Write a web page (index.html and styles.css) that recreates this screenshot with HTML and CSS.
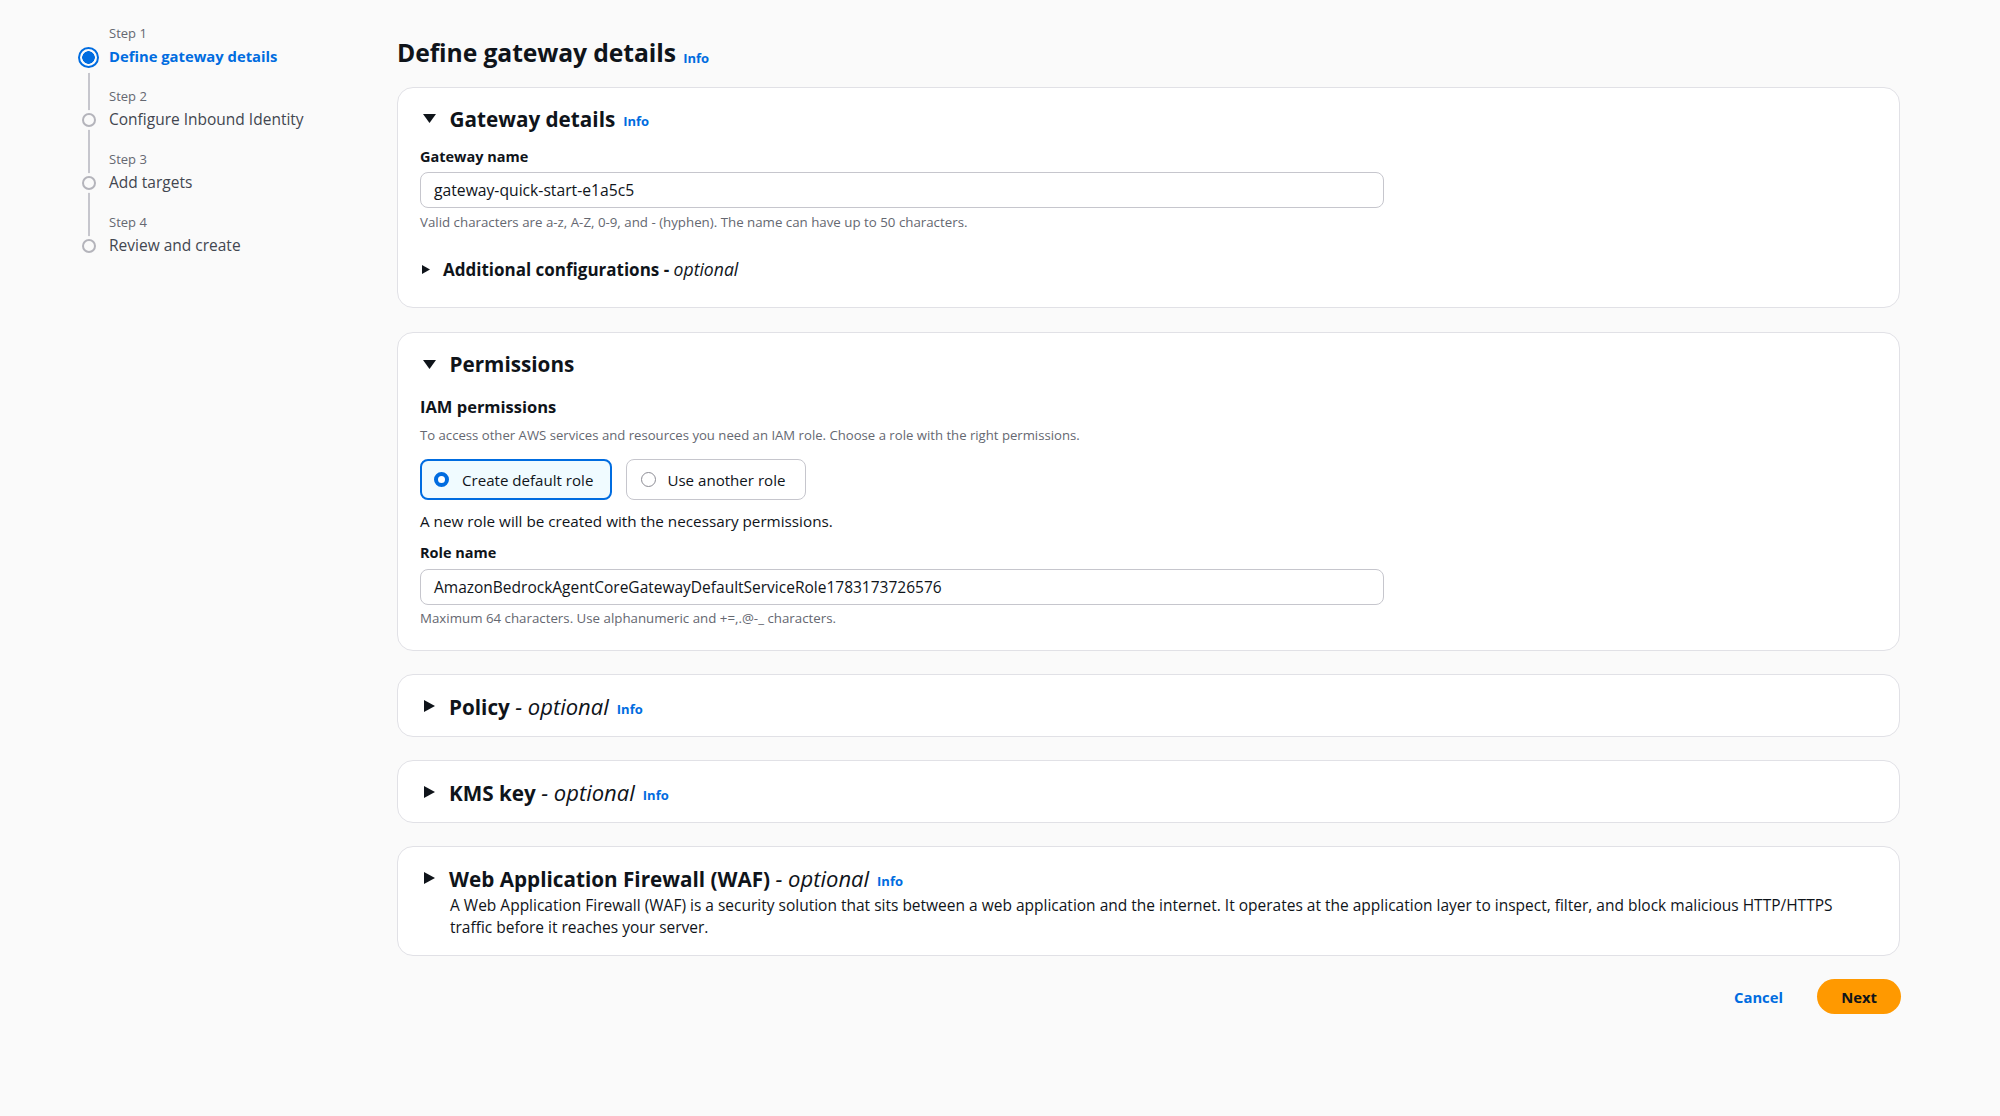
FILE: index.html
```html
<!DOCTYPE html>
<html lang="en">
<head>
<meta charset="utf-8">
<title>Define gateway details</title>
<link rel="stylesheet" href="styles.css">
</head>
<body>
<div class="page">
  <nav class="steps">
    <div class="step step-first">
      <div class="ind"><span class="dot dot-active"></span></div>
      <div class="step-label">Step 1</div>
      <div class="step-title active">Define gateway details</div>
    </div>
    <div class="step">
      <div class="ind"><span class="dot"></span></div>
      <div class="step-label">Step 2</div>
      <div class="step-title">Configure Inbound Identity</div>
    </div>
    <div class="step">
      <div class="ind"><span class="dot"></span></div>
      <div class="step-label">Step 3</div>
      <div class="step-title">Add targets</div>
    </div>
    <div class="step step-last">
      <div class="ind"><span class="dot"></span></div>
      <div class="step-label">Step 4</div>
      <div class="step-title">Review and create</div>
    </div>
  </nav>

  <main class="main">
    <h1 class="page-title">Define gateway details <a class="info info-lg">Info</a></h1>

    <section class="card card-gw">
      <div class="card-head">
        <svg class="caret-down" width="13" height="9" viewBox="0 0 13 9"><polygon points="0,0 13,0 6.5,9" fill="#0f141a"/></svg>
        <h2 class="card-title">Gateway details</h2>
        <a class="info">Info</a>
      </div>
      <label class="field-label fl-first">Gateway name</label>
      <div class="input">gateway-quick-start-e1a5c5</div>
      <p class="hint">Valid characters are a-z, A-Z, 0-9, and - (hyphen). The name can have up to 50 characters.</p>
      <div class="sub-expander">
        <svg class="caret-right-sm" width="8" height="9" viewBox="0 0 8 9"><polygon points="0,0 8,4.5 0,9" fill="#0f141a"/></svg>
        <span class="sub-title">Additional configurations - <em>optional</em></span>
      </div>
    </section>

    <section class="card card-perm">
      <div class="card-head">
        <svg class="caret-down" width="13" height="9" viewBox="0 0 13 9"><polygon points="0,0 13,0 6.5,9" fill="#0f141a"/></svg>
        <h2 class="card-title">Permissions</h2>
      </div>
      <h3 class="group-title">IAM permissions</h3>
      <p class="desc">To access other AWS services and resources you need an IAM role. Choose a role with the right permissions.</p>
      <div class="tiles">
        <div class="tile tile-on"><span class="radio radio-on"></span>Create default role</div>
        <div class="tile"><span class="radio"></span>Use another role</div>
      </div>
      <p class="body-text">A new role will be created with the necessary permissions.</p>
      <label class="field-label fl-role">Role name</label>
      <div class="input input-role">AmazonBedrockAgentCoreGatewayDefaultServiceRole1783173726576</div>
      <p class="hint hint-2">Maximum 64 characters. Use alphanumeric and +=,.@-_ characters.</p>
    </section>

    <section class="card card-sm">
      <div class="card-head">
        <svg class="caret-right" width="11" height="12" viewBox="0 0 11 12"><polygon points="0,0 11,6 0,12" fill="#0f141a"/></svg>
        <h2 class="card-title">Policy <em class="opt">- optional</em></h2>
        <a class="info">Info</a>
      </div>
    </section>

    <section class="card card-sm">
      <div class="card-head">
        <svg class="caret-right" width="11" height="12" viewBox="0 0 11 12"><polygon points="0,0 11,6 0,12" fill="#0f141a"/></svg>
        <h2 class="card-title">KMS key <em class="opt">- optional</em></h2>
        <a class="info">Info</a>
      </div>
    </section>

    <section class="card">
      <div class="card-head">
        <svg class="caret-right" width="11" height="12" viewBox="0 0 11 12"><polygon points="0,0 11,6 0,12" fill="#0f141a"/></svg>
        <h2 class="card-title">Web Application Firewall (WAF) <em class="opt">- optional</em></h2>
        <a class="info">Info</a>
      </div>
      <p class="card-desc">A Web Application Firewall (WAF) is a security solution that sits between a web application and the internet. It operates at the application layer to inspect, filter, and block malicious HTTP/HTTPS traffic before it reaches your server.</p>
    </section>

    <div class="actions">
      <a class="btn-link">Cancel</a>
      <a class="btn-primary">Next</a>
    </div>
  </main>
</div>
</body>
</html>
```

FILE: styles.css
```css
* { box-sizing: border-box; }

html, body {
  margin: 0;
  padding: 0;
  background: #fafafa;
  color: #0f141a;
  font-family: "Open Sans", "Noto Sans", sans-serif;
}

.page {
  display: flex;
  align-items: flex-start;
}

/* ---------- steps ---------- */
.steps {
  width: 397px;
  flex: none;
  padding: 21px 0 0 78px;
}

.step {
  display: grid;
  grid-template-columns: 21px 1fr;
  grid-template-rows: 24px 24px 15px;
  column-gap: 10px;
}

.ind {
  grid-column: 1;
  grid-row: 1 / 4;
  display: grid;
  grid-template-rows: 24px 24px 15px;
  justify-items: center;
  background: linear-gradient(#c6c6cd, #c6c6cd) center / 2px 100% no-repeat;
}
.step-first .ind {
  background-position: center bottom;
  background-size: 2px 27px;
}
.step-last .ind {
  background-position: center top;
  background-size: 2px 36px;
}

.dot {
  grid-row: 2;
  align-self: center;
  width: 14px;
  height: 14px;
  border-radius: 50%;
  border: 2px solid #b4b4bb;
  background: #fafafa;
  box-shadow: 0 0 0 3px #fafafa;
}
.dot-active {
  width: 21px;
  height: 21px;
  border: 2px solid #006ce0;
  background: radial-gradient(circle, #006ce0 0 6px, #fafafa 6.5px);
  box-shadow: 0 0 0 5px #fafafa;
}

.step-label {
  grid-column: 2;
  grid-row: 1;
  font-size: 13px;
  line-height: 24px;
  color: #656871;
}
.step-title {
  grid-column: 2;
  grid-row: 2;
  font-size: 15.5px;
  line-height: 22px;
  color: #424650;
  white-space: nowrap;
}
.step-title.active {
  color: #006ce0;
  font-weight: 700;
  font-size: 14.8px;
}

/* ---------- main ---------- */
.main {
  width: 1503px;
  flex: none;
  padding-top: 34px;
}

.page-title {
  margin: 0 0 15.5px;
  font-size: 24.7px;
  line-height: 37px;
  font-weight: 700;
  letter-spacing: -0.1px;
}

.info {
  color: #006ce0;
  font-size: 13px;
  line-height: 1;
  font-weight: 700;
  margin-left: 6px;
  letter-spacing: 0;
}
.info-lg {
  margin-left: 1px;
  vertical-align: -1px;
}

.card {
  background: #ffffff;
  border: 1px solid #e1e1e6;
  border-radius: 16px;
  padding: 17px 22px 17px 22px;
  margin-bottom: 23px;
}
.card-gw { padding-bottom: 25.5px; margin-bottom: 24px; }
.card-perm { padding-bottom: 23px; }
.card-sm { padding-bottom: 16px; }

.card-head {
  display: flex;
  align-items: center;
  height: 28px;
}
.card-head .info {
  margin-left: 8px;
  position: relative;
  top: 3px;
}

.caret-down {
  flex: none;
  margin: 0 13.5px 0 3px;
}
.caret-right {
  flex: none;
  margin: 0 14px 0 4px;
}

.card-title {
  margin: 0;
  font-size: 20.7px;
  line-height: 28px;
  font-weight: 700;
  white-space: nowrap;
}
.card-title .opt {
  font-weight: 400;
  font-style: italic;
  font-size: 22px;
}

.field-label {
  display: block;
  font-size: 14.5px;
  line-height: 20px;
  font-weight: 700;
}
.fl-first { margin-top: 14px; }
.fl-role { margin-top: 11px; }

.input {
  margin-top: 5px;
  width: 964px;
  height: 36px;
  border: 1px solid #c6c6cd;
  border-radius: 8px;
  background: #ffffff;
  padding: 0 13px;
  font-size: 15.7px;
  line-height: 34px;
  white-space: nowrap;
}
.input-role {
  margin-top: 6px;
  font-size: 15.5px;
}

.hint {
  margin: 5px 0 0;
  font-size: 13.3px;
  line-height: 18px;
  color: #656871;
}
.hint-2 { margin-top: 4px; }

.sub-expander {
  display: flex;
  align-items: center;
  margin-top: 27px;
  height: 24px;
}
.caret-right-sm {
  flex: none;
  margin: 0 13px 0 2px;
}
.sub-title {
  font-size: 17px;
  line-height: 24px;
  font-weight: 700;
}
.sub-title em {
  font-weight: 400;
  font-size: 17.6px;
}

.group-title {
  margin: 18px 0 0;
  font-size: 16.5px;
  line-height: 22px;
  font-weight: 700;
}
.desc {
  margin: 8px 0 0;
  font-size: 13.15px;
  line-height: 18px;
  color: #656871;
}

.tiles {
  display: flex;
  gap: 14px;
  margin-top: 15px;
}
.tile {
  display: flex;
  align-items: center;
  height: 41px;
  padding: 0 20px 0 14.5px;
  border: 1.5px solid #c6c6cd;
  border-radius: 8px;
  background: #ffffff;
  font-size: 15.1px;
  white-space: nowrap;
}
.tile-on {
  border: 2px solid #006ce0;
  background: #f0fbff;
  padding: 0 16.5px 0 12px;
}
.radio {
  width: 15px;
  height: 15px;
  border-radius: 50%;
  border: 1.5px solid #8c8c94;
  background: #ffffff;
  margin-right: 11px;
  flex: none;
}
.radio-on {
  border: 4.5px solid #006ce0;
  margin-right: 13px;
}

.body-text {
  margin: 10px 0 0;
  font-size: 15.25px;
  line-height: 22px;
}

.card-desc {
  margin: 2px 0 0 30px;
  padding-right: 40px;
  font-size: 15.5px;
  line-height: 22px;
}

.actions {
  display: flex;
  justify-content: flex-end;
  align-items: center;
  gap: 34px;
}
.btn-link {
  color: #006ce0;
  font-weight: 700;
  font-size: 14.8px;
}
.btn-primary {
  display: flex;
  align-items: center;
  justify-content: center;
  width: 84px;
  height: 35px;
  border-radius: 18px;
  background: #ff9900;
  color: #0f141a;
  font-weight: 700;
  font-size: 14.8px;
  margin-right: -1px;
}
```
